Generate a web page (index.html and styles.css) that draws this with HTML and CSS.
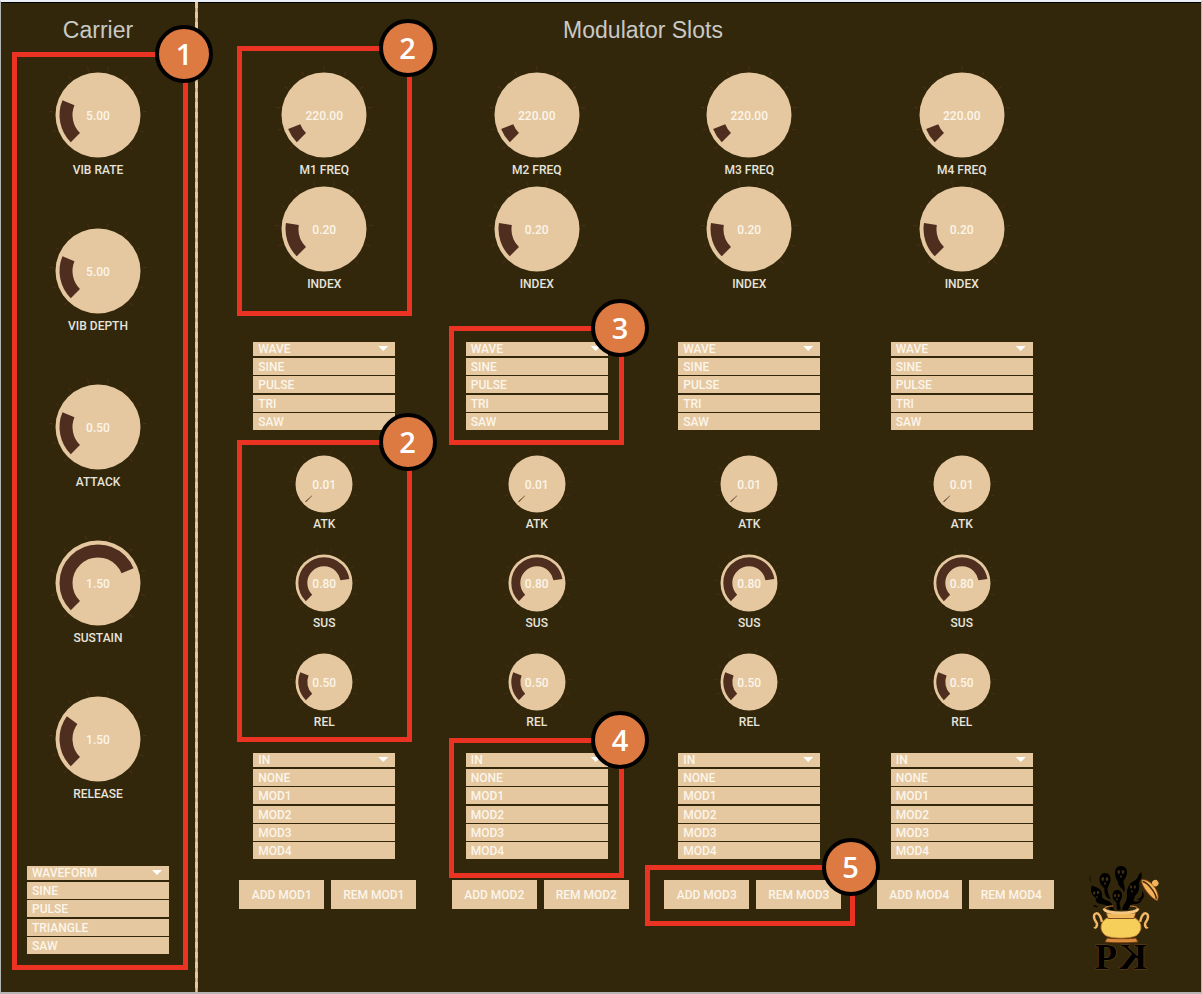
FILE: index.html
```html
<!DOCTYPE html>
<html lang="en">
<head>
<meta charset="utf-8">
<title>FM Synth</title>
<link rel="stylesheet" href="styles.css">
</head>
<body>
<svg class="defs" aria-hidden="true">
  <defs>
    <g id="dial-12"><path class="ticks" pathLength="1104" d="M-32.73 33.31A46.7 46.7 0 1 1 32.73 33.31"/><circle class="face" r="42.5"/></g>
    <g id="dial-11"><path class="ticks" pathLength="1004" d="M-32.73 33.31A46.7 46.7 0 1 1 32.73 33.31"/><circle class="face" r="42.5"/></g>
    <g id="dial-10"><path class="ticks" pathLength="904" d="M-32.73 33.31A46.7 46.7 0 1 1 32.73 33.31"/><circle class="face" r="42.5"/></g>
    <g id="dial-small"><path class="ticks" pathLength="1104" d="M-22.92 23.32A32.7 32.7 0 1 1 22.92 23.32"/><circle class="face" r="28.5"/></g>
  </defs>
</svg>
<main class="window">
  <section class="carrier">
    <h2 class="title">Carrier</h2>
    <div class="carrier-body">
      <div class="knobs knobs-wide">
        <label class="knob"><svg viewBox="-43 -43 86 86"><use href="#dial-12"/><circle class="arc" r="32" pathLength="360" stroke-dasharray="67.5 360"/></svg><span class="value">5.00</span><input type="range" min="0" max="20" value="5"><span class="name">VIB RATE</span></label>
        <label class="knob"><svg viewBox="-43 -43 86 86"><use href="#dial-12"/><circle class="arc" r="32" pathLength="360" stroke-dasharray="67.5 360"/></svg><span class="value">5.00</span><input type="range" min="0" max="20" value="5"><span class="name">VIB DEPTH</span></label>
        <label class="knob"><svg viewBox="-43 -43 86 86"><use href="#dial-12"/><circle class="arc" r="32" pathLength="360" stroke-dasharray="67.5 360"/></svg><span class="value">0.50</span><input type="range" min="0" max="2" step="0.01" value="0.5"><span class="name">ATTACK</span></label>
        <label class="knob"><svg viewBox="-43 -43 86 86"><use href="#dial-10"/><circle class="arc" r="32" pathLength="360" stroke-dasharray="202.5 360"/></svg><span class="value">1.50</span><input type="range" min="0" max="2" step="0.01" value="1.5"><span class="name">SUSTAIN</span></label>
        <label class="knob"><svg viewBox="-43 -43 86 86"><use href="#dial-12"/><circle class="arc" r="32" pathLength="360" stroke-dasharray="81 360"/></svg><span class="value">1.50</span><input type="range" min="0" max="5" step="0.01" value="1.5"><span class="name">RELEASE</span></label>
      </div>
      <div class="menu">
        <button class="menu-head" aria-expanded="true">WAVEFORM</button>
        <ul class="menu-list"><li><button>SINE</button></li><li><button>PULSE</button></li><li><button>TRIANGLE</button></li><li><button>SAW</button></li></ul>
      </div>
      <div class="callout callout-carrier"><span class="badge">1</span></div>
    </div>
  </section>
  <div class="divider"></div>
  <section class="modulators">
    <h2 class="title">Modulator Slots</h2>
    <div class="slots">
      <div class="slot">
        <div class="group pitch">
          <div class="knobs">
            <label class="knob"><svg viewBox="-43 -43 86 86"><use href="#dial-11"/><circle class="arc" r="32" pathLength="360" stroke-dasharray="23.8 360"/></svg><span class="value">220.00</span><input type="range" min="0" max="2500" value="220"><span class="name">M1 FREQ</span></label>
            <label class="knob"><svg viewBox="-43 -43 86 86"><use href="#dial-12"/><circle class="arc" r="32" pathLength="360" stroke-dasharray="54 360"/></svg><span class="value">0.20</span><input type="range" min="0" max="1" step="0.01" value="0.2"><span class="name">INDEX</span></label>
          </div>
          <div class="callout callout-pitch"><span class="badge">2</span></div>
        </div>
        <div class="group wave">
          <div class="menu">
            <button class="menu-head" aria-expanded="true">WAVE</button>
            <ul class="menu-list"><li><button>SINE</button></li><li><button>PULSE</button></li><li><button>TRI</button></li><li><button>SAW</button></li></ul>
          </div>
        </div>
        <div class="group envelope">
          <div class="knobs knobs-small">
            <label class="knob"><svg viewBox="-29 -29 58 58"><use href="#dial-small"/><circle class="arc" r="21.2" pathLength="360" stroke-dasharray="2 360"/></svg><span class="value">0.01</span><input type="range" min="0" max="2" step="0.01" value="0.01"><span class="name">ATK</span></label>
            <label class="knob"><svg viewBox="-29 -29 58 58"><use href="#dial-small"/><circle class="arc" r="21.2" pathLength="360" stroke-dasharray="216 360"/></svg><span class="value">0.80</span><input type="range" min="0" max="1" step="0.01" value="0.8"><span class="name">SUS</span></label>
            <label class="knob"><svg viewBox="-29 -29 58 58"><use href="#dial-small"/><circle class="arc" r="21.2" pathLength="360" stroke-dasharray="67.5 360"/></svg><span class="value">0.50</span><input type="range" min="0" max="2" step="0.01" value="0.5"><span class="name">REL</span></label>
          </div>
          <div class="callout callout-envelope"><span class="badge">2</span></div>
        </div>
        <div class="group routing">
          <div class="menu">
            <button class="menu-head" aria-expanded="true">IN</button>
            <ul class="menu-list menu-list-long"><li><button>NONE</button></li><li><button>MOD1</button></li><li><button>MOD2</button></li><li><button>MOD3</button></li><li><button>MOD4</button></li></ul>
          </div>
        </div>
        <div class="group actions"><button class="action">ADD MOD1</button><button class="action">REM MOD1</button></div>
      </div>

      <div class="slot">
        <div class="group pitch">
          <div class="knobs">
            <label class="knob"><svg viewBox="-43 -43 86 86"><use href="#dial-11"/><circle class="arc" r="32" pathLength="360" stroke-dasharray="23.8 360"/></svg><span class="value">220.00</span><input type="range" min="0" max="2500" value="220"><span class="name">M2 FREQ</span></label>
            <label class="knob"><svg viewBox="-43 -43 86 86"><use href="#dial-12"/><circle class="arc" r="32" pathLength="360" stroke-dasharray="54 360"/></svg><span class="value">0.20</span><input type="range" min="0" max="1" step="0.01" value="0.2"><span class="name">INDEX</span></label>
          </div>
        </div>
        <div class="group wave">
          <div class="menu">
            <button class="menu-head" aria-expanded="true">WAVE</button>
            <ul class="menu-list"><li><button>SINE</button></li><li><button>PULSE</button></li><li><button>TRI</button></li><li><button>SAW</button></li></ul>
          </div>
          <div class="callout callout-wave"><span class="badge">3</span></div>
        </div>
        <div class="group envelope">
          <div class="knobs knobs-small">
            <label class="knob"><svg viewBox="-29 -29 58 58"><use href="#dial-small"/><circle class="arc" r="21.2" pathLength="360" stroke-dasharray="2 360"/></svg><span class="value">0.01</span><input type="range" min="0" max="2" step="0.01" value="0.01"><span class="name">ATK</span></label>
            <label class="knob"><svg viewBox="-29 -29 58 58"><use href="#dial-small"/><circle class="arc" r="21.2" pathLength="360" stroke-dasharray="216 360"/></svg><span class="value">0.80</span><input type="range" min="0" max="1" step="0.01" value="0.8"><span class="name">SUS</span></label>
            <label class="knob"><svg viewBox="-29 -29 58 58"><use href="#dial-small"/><circle class="arc" r="21.2" pathLength="360" stroke-dasharray="67.5 360"/></svg><span class="value">0.50</span><input type="range" min="0" max="2" step="0.01" value="0.5"><span class="name">REL</span></label>
          </div>
        </div>
        <div class="group routing">
          <div class="menu">
            <button class="menu-head" aria-expanded="true">IN</button>
            <ul class="menu-list menu-list-long"><li><button>NONE</button></li><li><button>MOD1</button></li><li><button>MOD2</button></li><li><button>MOD3</button></li><li><button>MOD4</button></li></ul>
          </div>
          <div class="callout callout-routing"><span class="badge">4</span></div>
        </div>
        <div class="group actions"><button class="action">ADD MOD2</button><button class="action">REM MOD2</button></div>
      </div>

      <div class="slot">
        <div class="group pitch">
          <div class="knobs">
            <label class="knob"><svg viewBox="-43 -43 86 86"><use href="#dial-11"/><circle class="arc" r="32" pathLength="360" stroke-dasharray="23.8 360"/></svg><span class="value">220.00</span><input type="range" min="0" max="2500" value="220"><span class="name">M3 FREQ</span></label>
            <label class="knob"><svg viewBox="-43 -43 86 86"><use href="#dial-12"/><circle class="arc" r="32" pathLength="360" stroke-dasharray="54 360"/></svg><span class="value">0.20</span><input type="range" min="0" max="1" step="0.01" value="0.2"><span class="name">INDEX</span></label>
          </div>
        </div>
        <div class="group wave">
          <div class="menu">
            <button class="menu-head" aria-expanded="true">WAVE</button>
            <ul class="menu-list"><li><button>SINE</button></li><li><button>PULSE</button></li><li><button>TRI</button></li><li><button>SAW</button></li></ul>
          </div>
        </div>
        <div class="group envelope">
          <div class="knobs knobs-small">
            <label class="knob"><svg viewBox="-29 -29 58 58"><use href="#dial-small"/><circle class="arc" r="21.2" pathLength="360" stroke-dasharray="2 360"/></svg><span class="value">0.01</span><input type="range" min="0" max="2" step="0.01" value="0.01"><span class="name">ATK</span></label>
            <label class="knob"><svg viewBox="-29 -29 58 58"><use href="#dial-small"/><circle class="arc" r="21.2" pathLength="360" stroke-dasharray="216 360"/></svg><span class="value">0.80</span><input type="range" min="0" max="1" step="0.01" value="0.8"><span class="name">SUS</span></label>
            <label class="knob"><svg viewBox="-29 -29 58 58"><use href="#dial-small"/><circle class="arc" r="21.2" pathLength="360" stroke-dasharray="67.5 360"/></svg><span class="value">0.50</span><input type="range" min="0" max="2" step="0.01" value="0.5"><span class="name">REL</span></label>
          </div>
        </div>
        <div class="group routing">
          <div class="menu">
            <button class="menu-head" aria-expanded="true">IN</button>
            <ul class="menu-list menu-list-long"><li><button>NONE</button></li><li><button>MOD1</button></li><li><button>MOD2</button></li><li><button>MOD3</button></li><li><button>MOD4</button></li></ul>
          </div>
        </div>
        <div class="group actions"><button class="action">ADD MOD3</button><button class="action">REM MOD3</button><div class="callout callout-actions"><span class="badge">5</span></div></div>
      </div>

      <div class="slot">
        <div class="group pitch">
          <div class="knobs">
            <label class="knob"><svg viewBox="-43 -43 86 86"><use href="#dial-11"/><circle class="arc" r="32" pathLength="360" stroke-dasharray="23.8 360"/></svg><span class="value">220.00</span><input type="range" min="0" max="2500" value="220"><span class="name">M4 FREQ</span></label>
            <label class="knob"><svg viewBox="-43 -43 86 86"><use href="#dial-12"/><circle class="arc" r="32" pathLength="360" stroke-dasharray="54 360"/></svg><span class="value">0.20</span><input type="range" min="0" max="1" step="0.01" value="0.2"><span class="name">INDEX</span></label>
          </div>
        </div>
        <div class="group wave">
          <div class="menu">
            <button class="menu-head" aria-expanded="true">WAVE</button>
            <ul class="menu-list"><li><button>SINE</button></li><li><button>PULSE</button></li><li><button>TRI</button></li><li><button>SAW</button></li></ul>
          </div>
        </div>
        <div class="group envelope">
          <div class="knobs knobs-small">
            <label class="knob"><svg viewBox="-29 -29 58 58"><use href="#dial-small"/><circle class="arc" r="21.2" pathLength="360" stroke-dasharray="2 360"/></svg><span class="value">0.01</span><input type="range" min="0" max="2" step="0.01" value="0.01"><span class="name">ATK</span></label>
            <label class="knob"><svg viewBox="-29 -29 58 58"><use href="#dial-small"/><circle class="arc" r="21.2" pathLength="360" stroke-dasharray="216 360"/></svg><span class="value">0.80</span><input type="range" min="0" max="1" step="0.01" value="0.8"><span class="name">SUS</span></label>
            <label class="knob"><svg viewBox="-29 -29 58 58"><use href="#dial-small"/><circle class="arc" r="21.2" pathLength="360" stroke-dasharray="67.5 360"/></svg><span class="value">0.50</span><input type="range" min="0" max="2" step="0.01" value="0.5"><span class="name">REL</span></label>
          </div>
        </div>
        <div class="group routing">
          <div class="menu">
            <button class="menu-head" aria-expanded="true">IN</button>
            <ul class="menu-list menu-list-long"><li><button>NONE</button></li><li><button>MOD1</button></li><li><button>MOD2</button></li><li><button>MOD3</button></li><li><button>MOD4</button></li></ul>
          </div>
        </div>
        <div class="group actions"><button class="action">ADD MOD4</button><button class="action">REM MOD4</button></div>
      </div>
    </div>
    <svg class="logo" viewBox="0 0 80 110" role="img" aria-label="PK">
      <!-- spirits rising from the pot -->
      <g fill="#000">
        <path d="M36 4c4 0 6.500 3 6 7-.3 3.500-2.500 6-3.500 8.500 0 4 2.500 6 .500 11-1-5-7-6-6-11-2-2-3-5-3-8.500 0-4.500 2.500-7 6-7z"/>
        <path d="M20 11c4 0 6 3 5.500 7-.4 4-2.500 6-3 8.500 0 5 2 7 3 11-5-2-6.500-6-6-11-2.500-2-5-5-5-8.500 0-4.500 2.500-7 5.500-7z"/>
        <path d="M7 23c1 2 3 1 6 3 3.500 2 4.500 5 4 9 2 4 8 3 10 7l2 6h-4c0-5-5-5-9-6-4-.500-6-3-5-6-2.500-2-5-4-5-8 0-2 .500-3 1-5z"/>
        <path d="M32 28c3.500 0 5.500 2.500 5 6.500-.3 3-2 4-2.500 6.500 0 2 1.500 4 1 7h-3c-1-3-1-5-1-7.500-2-1.500-4-3-4-6.500 0-4 2-6 4.500-6z"/>
        <path d="M43 48h-6c1-6 5-8 5-14-.500-4 0-8 3-12 2-3 6-3 8-7 .500-3 2-4 4-4.500-1 2 .5 4-1 6.500-1.500 2-2 3-2 5 1 5-1 9-4 12-1 3-2 4-1 5 3 2 5-1 8-1.500-1 3-4 5-8 4.500-3 0-5 2-6 6z"/>
        <path d="M57 29c2.500 3 2.500 6 .500 8-2 1.500-4 1-6 0 4 0 6-3 5.500-8zM6 13c-2 2-2 5 0 7-1-2-1-5 0-7zM8 43c2 0 4 1 5 2-2 .5-4 0-5-2z"/>
      </g>
      <g fill="#41300f">
        <ellipse cx="33.800" cy="10" rx="1.300" ry="2"/><ellipse cx="38" cy="10" rx="1.300" ry="2"/><ellipse cx="36" cy="14.500" rx=".8" ry="1.500"/>
        <ellipse cx="17.800" cy="17" rx="1.300" ry="2"/><ellipse cx="22" cy="17" rx="1.300" ry="2"/><ellipse cx="20" cy="21.500" rx=".8" ry="1.500"/>
        <ellipse cx="9.200" cy="31" rx="1.200" ry="1.800"/><ellipse cx="13" cy="30.500" rx="1.200" ry="1.800"/><ellipse cx="12" cy="35" rx=".7" ry="1.300"/>
        <ellipse cx="30" cy="33.500" rx="1.100" ry="1.700"/><ellipse cx="33.700" cy="33.500" rx="1.100" ry="1.700"/><ellipse cx="32" cy="37.500" rx=".7" ry="1.300"/>
        <ellipse cx="46" cy="25" rx="1.100" ry="1.800"/><ellipse cx="49.800" cy="25" rx="1.100" ry="1.800"/><ellipse cx="47" cy="29.500" rx=".7" ry="1.400"/>
      </g>
      <!-- lid -->
      <g transform="translate(66 27) rotate(52)">
        <path d="M-13 2C-10-6 9-6 13 2 9 6-9 6-13 2z" fill="#f3b35a" stroke="#8a3f10" stroke-width=".8"/>
        <path d="M-11 2C-7-1.500 7-1.500 11 2" fill="none" stroke="#442508" stroke-width="1.500"/>
        <circle cx="-2" cy="-7" r="3.200" fill="#f3b35a"/>
      </g>
      <!-- pot -->
      <path d="M17 60C14 47 7 51 9.500 57c.8 3 3 3 2.500 6-.3 2-2 3-2.500 2M55 60c3-13 10-9 7.500-3-.8 3-3 3-2.500 6 .3 2 2 3 2.500 2" fill="none" stroke="#f2b868" stroke-width="2.500"/>
      <path d="M22 76c4 1 25 1 29 0l2 4c-7 1-27 1-33 0z" fill="#d98c3c" stroke="#6d3510" stroke-width=".8"/>
      <path d="M22 56h28c7 4 8 12 2 17-4 4-28 4-32 0-6-5-5-13 2-17z" fill="#f6cf5a" stroke="#c98432" stroke-width=".8"/>
      <path d="M21 51h30l-2 5.500H23z" fill="#f0b85a" stroke="#6d3510" stroke-width=".8"/>
      <path d="M19 46.500c1 6 33 6 34 0" fill="none" stroke="#f5c780" stroke-width="2.800"/>
      <path d="M19 47c0-2 5-3 9-3M53 47c0-2-4-3-8-3" fill="none" stroke="#d98c3c"/>
      <g class="logo-text"><text x="10" y="107">P</text><text transform="translate(62 107) scale(-1 1)">K</text></g>
    </svg>
  </section>
</main>
</body>
</html>
```
FILE: styles.css
```css
:root {
  --ground: #32270b;
  --sand: #e5c8a0;
  --brown: #4e2e1e;
  --red: #ea3323;
}

* { box-sizing: border-box; }

body {
  margin: 0;
  background: #1b1d22;
  font: 500 12px/16px Roboto, sans-serif;
}

button {
  margin: 0;
  padding: 0;
  border: 0;
  background: var(--sand);
  color: #fcf5ea;
  font: inherit;
}

.defs { position: absolute; width: 0; height: 0; }

.window {
  display: grid;
  grid-template-columns: 194px 3px 1fr;
  min-height: 100vh;
  border: solid #b5b5b5;
  border-width: 2px 1px 2px 1px;
  border-top-color: #eceff4;
  background:
    linear-gradient(#000, #000) top / 100% 1px no-repeat,
    var(--ground);
}

.title {
  margin: 0 0 28px;
  padding-top: 14px;
  color: #c9c9c5;
  font: 23px/28px "Liberation Sans", Arial, sans-serif;
  text-align: center;
}

.divider {
  background:
    linear-gradient(var(--sand), var(--sand)) 1px 0 / 1px 100% no-repeat,
    repeating-linear-gradient(var(--sand) 0 6px, #b8a07a 6px 10px);
}

.carrier-body { position: relative; }

.modulators {
  display: grid;
  grid-template-columns: 1fr 133px;
  grid-template-rows: auto 1fr;
  padding-left: 20px;
}

.slots {
  grid-column: 1;
  display: grid;
  grid-template-columns: repeat(4, 1fr);
}

.group { position: relative; }
.pitch { margin-bottom: 50px; }
.wave { margin-bottom: 25px; }
.envelope { margin-bottom: 23px; }
.routing { margin-bottom: 21px; }

.knobs {
  display: flex;
  flex-direction: column;
  align-items: center;
  gap: 8px;
}

.knobs-wide { gap: 50px; margin-bottom: 64px; }
.knobs-small { gap: 22px; }

.knob {
  position: relative;
  display: flex;
  flex-direction: column;
  align-items: center;
  gap: 4px;
  width: 86px;
}

.knob svg { display: block; width: 100%; overflow: visible; }
.knobs-small .knob { width: 58px; gap: 3px; }

.knob input {
  position: absolute;
  inset: 0 0 20px;
  width: 100%;
  margin: 0;
  opacity: 0;
}

.value {
  position: absolute;
  top: 36px;
  color: #fcf5ea;
}

.knobs-small .value { top: 22px; }

.name { color: #e6e4dc; white-space: nowrap; }

.face { fill: var(--sand); }

.ticks {
  fill: none;
  stroke: #54301c;
  stroke-width: 4;
  stroke-dasharray: 4 96;
}

.arc {
  fill: none;
  stroke: var(--brown);
  stroke-width: 13;
  transform: rotate(135deg);
}

.knobs-small .arc { stroke-width: 9; }

.menu {
  display: grid;
  gap: 2px;
  width: 142px;
  margin: 0 auto;
}

.menu button {
  display: block;
  width: 100%;
  height: 17px;
  padding: 1px 0 0 5px;
  line-height: 16px;
  text-align: left;
}

.menu .menu-head {
  display: flex;
  justify-content: space-between;
  height: 14px;
  padding: 0 7px 0 5px;
  line-height: 14px;
}

.menu-head::after {
  content: "";
  width: 10px;
  height: 5px;
  margin-top: 4px;
  background: #fff;
  clip-path: polygon(0 0, 100% 0, 50% 100%);
}

.menu-list {
  display: flex;
  flex-direction: column;
  justify-content: space-between;
  height: 72px;
  margin: 0;
  padding: 0;
  list-style: none;
}

.menu-list-long { height: 90px; }

.actions {
  display: flex;
  justify-content: center;
  gap: 7px;
  padding-left: 7px;
}

.action { width: 85px; height: 29px; }

.callout {
  position: absolute;
  z-index: 2;
  border: 5px solid var(--red);
  pointer-events: none;
}

.callout-carrier { inset: -20px 7px -16px 11px; }
.callout-pitch { inset: -26px 19px -24px 19px; }
.callout-wave { inset: -16px 19px -15px 18px; }
.callout-envelope { inset: -15px 19px -12px 19px; }
.callout-routing { inset: -15px 19px -19px 18px; }
.callout-actions { inset: -15px 1px -17px 2px; }

.badge {
  position: absolute;
  top: -32px;
  right: -30px;
  width: 58px;
  height: 58px;
  border: 4px solid #000;
  border-radius: 50%;
  background: #dc7a42;
  color: #fff;
  font: 600 29px/50px "Open Sans", sans-serif;
  text-align: center;
}

.logo {
  grid-column: 2;
  align-self: end;
  width: 80px;
  margin: 0 0 20px 17px;
}

.modulators .title { grid-column: 1; }
.slots, .logo { grid-row: 2; }

.logo-text {
  fill: #000;
  stroke: #6b4019;
  stroke-width: 1px;
  paint-order: stroke;
  font: 700 36px "Liberation Serif", serif;
}
```
